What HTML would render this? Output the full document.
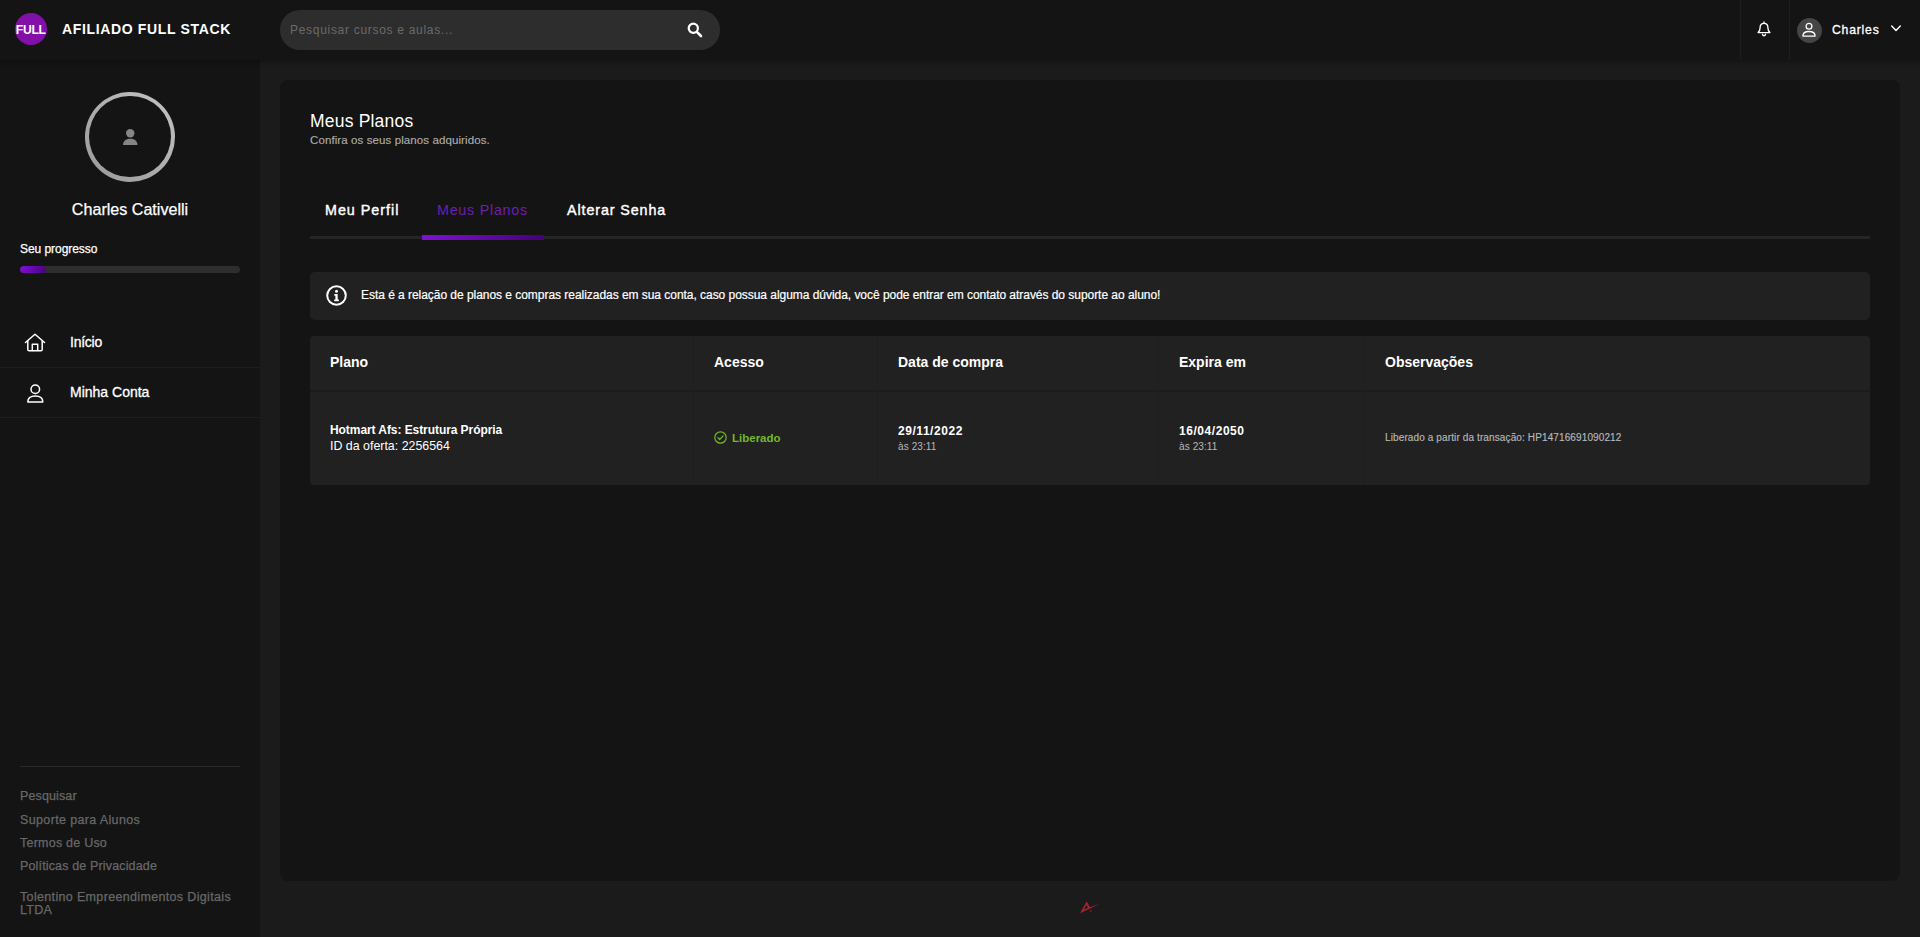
<!DOCTYPE html>
<html lang="pt-BR">
<head>
<meta charset="utf-8">
<title>Meus Planos</title>
<style>
*{box-sizing:border-box;margin:0;padding:0}
html,body{width:1920px;height:937px;overflow:hidden;background:#1b1b1b;font-family:"Liberation Sans",sans-serif;color:#fff}
.abs{position:absolute;white-space:nowrap;line-height:1}
svg{position:absolute;overflow:visible}
#header{position:absolute;left:0;top:0;width:1920px;height:60px;background:#141414;box-shadow:0 1px 5px rgba(0,0,0,.4);z-index:5}
#sidebar{position:absolute;left:0;top:60px;width:260px;height:877px;background:#141414}
#card{position:absolute;left:280px;top:80px;width:1620px;height:801px;background:#141414;border-radius:8px}
#logo{position:absolute;left:15px;top:13px;width:32px;height:32px;border-radius:50%;background:#8210a8}
#logo span{position:absolute;left:.8px;top:10.6px;font-weight:bold;font-size:12.2px;line-height:1;letter-spacing:-.3px;color:#fff}
#brand{left:62px;top:22px;font-weight:bold;font-size:14px;letter-spacing:.65px}
#search{position:absolute;left:280px;top:10px;width:440px;height:40px;border-radius:20px;background:#2d2d2d}
#search span{position:absolute;left:10px;top:14px;font-size:12px;line-height:1;letter-spacing:.7px;color:#6a6a6a;white-space:nowrap}
.vsep{position:absolute;top:0;width:1px;height:60px;background:#1e1e1e}
#uav{position:absolute;left:1797px;top:18px;width:25px;height:25px;border-radius:50%;background:#454545}
#uname{left:1832px;top:24.300px;font-size:12.200px;letter-spacing:.8px;-webkit-text-stroke:.3px #fff}
/* sidebar */
#avatar{position:absolute;left:85px;top:31.7px;width:90px;height:90px;border-radius:50%;background:linear-gradient(45deg,#989898,#c4c4c4)}#avatar i{position:absolute;left:4.300px;top:4.300px;width:81.400px;height:81.400px;border-radius:50%;background:#141414}
#sname{left:0;width:260px;text-align:center;top:140.5px;font-size:16.1px;-webkit-text-stroke:.25px #fff}
#prog{left:20px;top:183px;font-size:12px;letter-spacing:-.05px;-webkit-text-stroke:.25px #fff}
#bar{position:absolute;left:20px;top:206px;width:220px;height:7px;border-radius:4px;background:#2e2e2e;overflow:hidden}
#bar i{display:block;width:26px;height:7px;border-radius:4px;background:linear-gradient(120deg,#8410dc,#47007c)}
.nav{position:absolute;left:0;width:260px;height:50px;border-bottom:1px solid #1d1d1d}
.nav span{position:absolute;left:70px;top:17.3px;font-size:14px;line-height:1;white-space:nowrap;-webkit-text-stroke:.3px #fff}
#shr{position:absolute;left:20px;top:706px;width:220px;height:1px;background:#2a2a2a}
.fl{left:20px;font-size:12.5px;color:#686868;-webkit-text-stroke:.25px #686868}
/* card */
#ttl{left:30px;top:33px;font-size:17.5px;letter-spacing:.2px}
#sub{left:30px;top:55px;font-size:11.5px;letter-spacing:.1px;color:#adadad;-webkit-text-stroke:.15px #adadad}
.tab{top:123px;font-size:14.3px;letter-spacing:1px}
.tab.b{-webkit-text-stroke:.4px #fff}
#tline{position:absolute;left:30px;top:156px;width:1560px;height:3px;background:#252525}
#tact{position:absolute;left:142px;top:155px;width:122px;height:5px;background:linear-gradient(100deg,#8010d8,#440078)}
#info{position:absolute;left:30px;top:192px;width:1560px;height:47.5px;background:#212121;border-radius:5px}
#info span{left:51px;top:17px;font-size:12px;letter-spacing:-.04px;-webkit-text-stroke:.2px #fff}
#tbl{position:absolute;left:30px;top:256px;width:1560px;height:148.5px;background:#212121;border-radius:4px;overflow:hidden}
#tbl .hb{position:absolute;left:0;top:53.5px;width:1560px;height:2px;background:#1c1c1c}
#tbl .cs{position:absolute;top:0;width:1px;height:149px;background:#1e1e1e}
.th{top:19px;font-size:14px;font-weight:bold}
.b12{font-size:12px;font-weight:bold}
</style>
</head>
<body>
<div id="header">
  <div id="logo"><span>FULL</span></div>
  <div id="brand" class="abs">AFILIADO FULL STACK</div>
  <div id="search"><span>Pesquisar cursos e aulas...</span>
    <svg style="left:407px;top:12px" width="16" height="16" viewBox="0 0 16 16"><circle cx="6.3" cy="6.3" r="4.6" fill="none" stroke="#fff" stroke-width="2.2"/><path d="M9.8 9.8L14 14" stroke="#fff" stroke-width="2.6" stroke-linecap="round"/></svg>
  </div>
  <div class="vsep" style="left:1740px"></div>
  <div class="vsep" style="left:1789px"></div>
  <svg style="left:1757px;top:21px" width="14" height="16" viewBox="0 0 14 16" fill="none" stroke="#fff" stroke-width="1.35" stroke-linejoin="round" stroke-linecap="round"><path d="M7 .9v1.200"/><path d="M1.100 11.600C2.400 10.400 3.100 9 3.100 6.700 3.100 4 4.800 2.400 7 2.400s3.900 1.600 3.900 4.300c0 2.300.7 3.700 2 4.900z"/><path d="M5.500 13.300c.2.900.8 1.400 1.500 1.400s1.300-.5 1.500-1.400"/></svg>
  <div id="uav"></div>
  <svg style="left:1802px;top:22px" width="14" height="15" viewBox="0 0 14 15" fill="none" stroke="#fff" stroke-width="1.3"><circle cx="7" cy="4.2" r="2.9"/><path d="M.9 14.100c0-3 2.700-4.600 6.100-4.600s6.100 1.600 6.100 4.600z" stroke-linejoin="round"/></svg>
  <div id="uname" class="abs">Charles</div>
  <svg style="left:1891px;top:25px" width="10" height="7" viewBox="0 0 10 7" fill="none" stroke="#fff" stroke-width="1.4" stroke-linecap="round" stroke-linejoin="round"><path d="M.7.900L5 5.500 9.300.900"/></svg>
</div>

<div id="sidebar">
  <div id="avatar"><i></i></div>
  <svg style="left:122.800px;top:69px" width="14.500" height="16" viewBox="0 0 14.500 16" fill="#858585"><circle cx="7.250" cy="4.200" r="4.200"/><path d="M0 16c0-3.800 2.600-6.300 7.250-6.300s7.250 2.500 7.250 6.300z"/></svg>
  <div id="sname" class="abs">Charles Cativelli</div>
  <div id="prog" class="abs">Seu progresso</div>
  <div id="bar"><i></i></div>
  <div class="nav" style="top:258px"><span style="letter-spacing:-.25px">Início</span>
    <svg style="left:24px;top:15px" width="22" height="19" viewBox="0 0 22 19" fill="none" stroke="#fff" stroke-width="1.5" stroke-linecap="round" stroke-linejoin="round"><path d="M1.500 9.500L11 1.200l9.500 8.300"/><path d="M3.800 8v8.500c0 .8.500 1.300 1.300 1.300h11.800c.8 0 1.300-.5 1.300-1.300V8"/><path d="M8.300 17.500v-6.300h5.400v6.300"/></svg>
  </div>
  <div class="nav" style="top:308px"><span>Minha Conta</span>
    <svg style="left:26px;top:14px" width="18" height="22" viewBox="0 0 18 22" fill="none" stroke="#fff" stroke-width="1.5" stroke-linejoin="round"><circle cx="9.300" cy="7.200" r="4.300"/><path d="M1.800 20.100c0-3.900 3.200-6 7.500-6s7.500 2.100 7.500 6z"/></svg>
  </div>
  <div id="shr"></div>
  <div class="abs fl" style="top:730.4px;letter-spacing:.12px">Pesquisar</div>
  <div class="abs fl" style="top:753.5px;letter-spacing:.36px">Suporte para Alunos</div>
  <div class="abs fl" style="top:776.6px;letter-spacing:.23px">Termos de Uso</div>
  <div class="abs fl" style="top:799.8px;letter-spacing:.15px">Políticas de Privacidade</div>
  <div class="abs fl" style="top:830.9px;letter-spacing:.34px">Tolentino Empreendimentos Digitais</div>
  <div class="abs fl" style="top:843.9px;letter-spacing:.25px">LTDA</div>
</div>

<div id="card">
  <div id="ttl" class="abs">Meus Planos</div>
  <div id="sub" class="abs">Confira os seus planos adquiridos.</div>
  <div id="tline"></div><div id="tact"></div>
  <div class="abs tab b" style="left:45px">Meu Perfil</div>
  <div class="abs tab" style="left:157px;color:#6f1fb0;letter-spacing:.75px">Meus Planos</div>
  <div class="abs tab b" style="left:287px;letter-spacing:.9px">Alterar Senha</div>
  <div id="info">
    <svg style="left:16px;top:12.500px" width="21" height="21" viewBox="0 0 21 21"><circle cx="10.500" cy="10.500" r="9.300" fill="none" stroke="#fff" stroke-width="2"/><circle cx="10.500" cy="6.300" r="1.500" fill="#fff"/><path d="M8.300 9h3.400v5.500h1.200v1.700H8.200v-1.700h1.200v-3.800H8.300z" fill="#fff"/></svg>
    <span class="abs">Esta é a relação de planos e compras realizadas em sua conta, caso possua alguma dúvida, você pode entrar em contato através do suporte ao aluno!</span>
  </div>
  <div id="tbl">
    <div class="hb"></div>
    <div class="cs" style="left:383px"></div><div class="cs" style="left:567px"></div><div class="cs" style="left:848px"></div><div class="cs" style="left:1053px"></div>
    <div class="abs th" style="left:20px">Plano</div>
    <div class="abs th" style="left:404px">Acesso</div>
    <div class="abs th" style="left:588px">Data de compra</div>
    <div class="abs th" style="left:869px">Expira em</div>
    <div class="abs th" style="left:1075px">Observações</div>
    <div class="abs b12" style="left:20px;top:88px;letter-spacing:-.07px">Hotmart Afs: Estrutura Própria</div>
    <div class="abs" style="left:20px;top:104px;font-size:12.4px">ID da oferta: 2256564</div>
    <svg style="left:403.500px;top:95px" width="13" height="13" viewBox="0 0 13 13" fill="none" stroke="#74b828" stroke-width="1.200"><circle cx="6.500" cy="6.500" r="5.700"/><path d="M3.900 6.700l1.800 1.800 3.400-3.600" stroke-linecap="round" stroke-linejoin="round"/></svg>
    <div class="abs b12" style="left:422px;top:96.700px;color:#74b828;font-size:11.500px">Liberado</div>
    <div class="abs b12" style="left:588px;top:89px;letter-spacing:.55px">29/11/2022</div>
    <div class="abs" style="left:588px;top:106px;font-size:10px;letter-spacing:.1px;color:#b8b8b8">às 23:11</div>
    <div class="abs b12" style="left:869px;top:89px;letter-spacing:.55px">16/04/2050</div>
    <div class="abs" style="left:869px;top:106px;font-size:10px;letter-spacing:.1px;color:#b8b8b8">às 23:11</div>
    <div class="abs" style="left:1075px;top:97px;font-size:10px;letter-spacing:.12px;color:#b8b8b8;-webkit-text-stroke:.15px #b8b8b8">Liberado a partir da transação: HP14716691090212</div>
  </div>
</div>
<svg style="left:1080px;top:901px;z-index:6" width="21" height="13" viewBox="0 0 21 13"><path d="M6.600.5L0 12.300 20.500 2.500 10 6.200zM6.400 3.800L8 7 3.900 8.500z" fill="#a8262a" fill-rule="evenodd"/><circle cx="10.800" cy="10" r=".8" fill="#a8262a"/></svg>
</body>
</html>
